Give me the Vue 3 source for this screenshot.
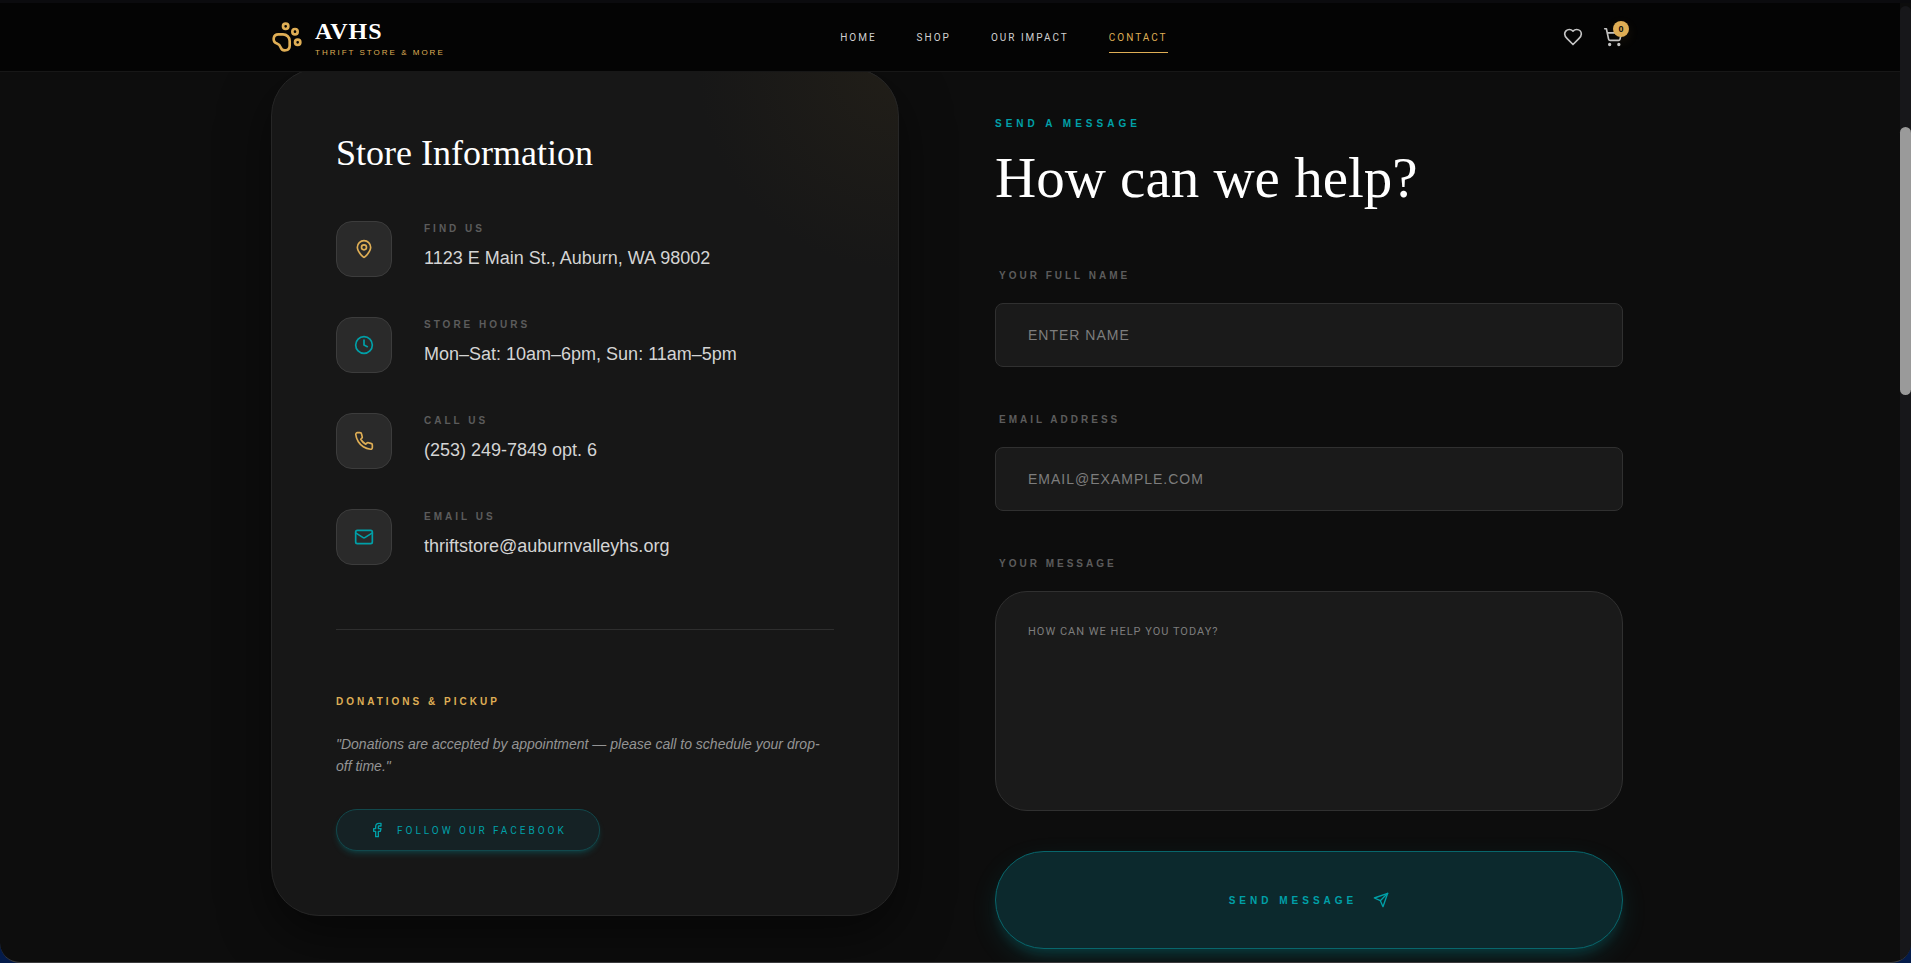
<template>
  <div class="window">
    <div class="page">
      <header class="site-header">
        <div class="header-inner">
          <a href="#" class="brand">
            <svg class="brand-icon" viewBox="0 0 24 24" aria-hidden="true">
              <circle cx="11" cy="4" r="2" />
              <circle cx="18" cy="8" r="2" />
              <circle cx="20" cy="16" r="2" />
              <path d="M9 10a5 5 0 0 1 5 5v3.500a3.500 3.500 0 0 1-6.840 1.045Q6.520 17.480 4.460 16.840A3.500 3.500 0 0 1 5.500 10Z" />
            </svg>
            <span class="brand-text">
              <strong>AVHS</strong>
              <small>Thrift Store &amp; More</small>
            </span>
          </a>

          <nav class="main-nav" aria-label="Main">
            <a
              v-for="link in navLinks"
              :key="link"
              href="#"
              :class="{ active: link === 'Contact' }"
            >{{ link }}</a>
          </nav>

          <div class="header-actions">
            <button type="button" aria-label="Wishlist">
              <svg viewBox="0 0 24 24" aria-hidden="true">
                <path d="M19 14c1.490-1.460 3-3.210 3-5.500A5.500 5.500 0 0 0 16.500 3c-1.760 0-3 .5-4.500 2-1.500-1.500-2.740-2-4.500-2A5.500 5.500 0 0 0 2 8.500c0 2.300 1.500 4.050 3 5.500l7 7Z" />
              </svg>
            </button>
            <button type="button" aria-label="Cart">
              <svg viewBox="0 0 24 24" aria-hidden="true">
                <circle cx="8" cy="21" r="1" />
                <circle cx="19" cy="21" r="1" />
                <path d="M2.050 2.050h2l2.660 12.420a2 2 0 0 0 2 1.580h9.780a2 2 0 0 0 1.950-1.570l1.650-7.430H5.120" />
              </svg>
              <span class="badge">{{ cartCount }}</span>
            </button>
          </div>
        </div>
      </header>

      <main class="contact">
        <section class="info-card">
          <h2>Store Information</h2>

          <ul class="info-list">
            <li v-for="item in storeInfo" :key="item.label">
              <span class="info-icon" :class="item.tone">
                <svg viewBox="0 0 24 24" aria-hidden="true">
                  <path v-for="d in item.paths" :key="d" :d="d" />
                </svg>
              </span>
              <div>
                <h3>{{ item.label }}</h3>
                <p>{{ item.value }}</p>
              </div>
            </li>
          </ul>

          <div class="donations">
            <h3>Donations &amp; Pickup</h3>
            <p>"Donations are accepted by appointment — please call to schedule your drop-off time."</p>
            <a href="#" class="facebook">
              <svg viewBox="0 0 24 24" aria-hidden="true">
                <path d="M18 2h-3a5 5 0 0 0-5 5v3H7v4h3v8h4v-8h3l1-4h-4V7a1 1 0 0 1 1-1h3z" />
              </svg>
              Follow our Facebook
            </a>
          </div>
        </section>

        <section class="message">
          <p class="eyebrow">Send a Message</p>
          <h1>How can we help?</h1>

          <form @submit.prevent>
            <div class="field">
              <label for="name">Your Full Name</label>
              <input id="name" v-model="form.name" type="text" placeholder="ENTER NAME" />
            </div>
            <div class="field">
              <label for="email">Email Address</label>
              <input id="email" v-model="form.email" type="email" placeholder="EMAIL@EXAMPLE.COM" />
            </div>
            <div class="field">
              <label for="message">Your Message</label>
              <textarea id="message" v-model="form.message" placeholder="HOW CAN WE HELP YOU TODAY?"></textarea>
            </div>
            <button type="submit" class="send">
              Send Message
              <svg viewBox="0 0 24 24" aria-hidden="true">
                <path d="m22 2-7 20-4-9-9-4Z" />
                <path d="M22 2 11 13" />
              </svg>
            </button>
          </form>
        </section>
      </main>
    </div>

    <div class="scroll-track" aria-hidden="true">
      <div class="scroll-thumb"></div>
    </div>
  </div>
</template>

<script setup>
import { ref, reactive } from 'vue';

const navLinks = ['Home', 'Shop', 'Our Impact', 'Contact'];
const cartCount = ref(0);

const form = reactive({ name: '', email: '', message: '' });

const storeInfo = [
  {
    label: 'Find Us',
    value: '1123 E Main St., Auburn, WA 98002',
    tone: 'gold',
    paths: [
      'M20 10c0 4.993-5.539 10.193-7.399 11.799a1 1 0 0 1-1.202 0C9.539 20.193 4 14.993 4 10a8 8 0 0 1 16 0',
      'M15 10a3 3 0 1 1-6 0a3 3 0 1 1 6 0'
    ]
  },
  {
    label: 'Store Hours',
    value: 'Mon–Sat: 10am–6pm, Sun: 11am–5pm',
    tone: 'teal',
    paths: ['M22 12a10 10 0 1 1-20 0a10 10 0 1 1 20 0', 'M12 6v6l4 2']
  },
  {
    label: 'Call Us',
    value: '(253) 249-7849 opt. 6',
    tone: 'gold',
    paths: [
      'M22 16.920v3a2 2 0 0 1-2.180 2 19.790 19.790 0 0 1-8.630-3.070 19.500 19.500 0 0 1-6-6 19.790 19.790 0 0 1-3.070-8.670A2 2 0 0 1 4.110 2h3a2 2 0 0 1 2 1.720 12.840 12.840 0 0 0 .7 2.810 2 2 0 0 1-.450 2.110L8.090 9.910a16 16 0 0 0 6 6l1.270-1.270a2 2 0 0 1 2.110-.450 12.840 12.840 0 0 0 2.810.7A2 2 0 0 1 22 16.920z'
    ]
  },
  {
    label: 'Email Us',
    value: 'thriftstore@auburnvalleyhs.org',
    tone: 'teal',
    paths: [
      'M4 4h16a2 2 0 0 1 2 2v12a2 2 0 0 1-2 2H4a2 2 0 0 1-2-2V6a2 2 0 0 1 2-2z',
      'm22 7-8.970 5.700a1.940 1.940 0 0 1-2.060 0L2 7'
    ]
  }
];
</script>

<style>
body {
  background: #041b4a;
}
</style>

<style scoped>
* {
  box-sizing: border-box;
}

.window {
  display: flex;
  height: 100vh;
  overflow: hidden;
  background: #0d0d0d;
  border-top: 3px solid #0b0b0e;
  border-bottom: 1px solid #3a3a3c;
  border-radius: 0 0 20px 20px;
  font-family: 'Liberation Sans', Arial, sans-serif;
  color: #d4d4d4;
}

.page {
  flex: 1;
  min-width: 0;
}

h1,
h2,
h3,
p,
ul {
  margin: 0;
  padding: 0;
}

h1,
h2 {
  font-family: 'Liberation Serif', serif;
  font-weight: 400;
  color: #fff;
}

a {
  text-decoration: none;
}

button {
  font-family: inherit;
  cursor: pointer;
}

svg {
  display: block;
  fill: none;
  stroke: currentColor;
  stroke-width: 2;
  stroke-linecap: round;
  stroke-linejoin: round;
}

/* Header */
.site-header {
  position: relative;
  z-index: 10;
  background: #040404;
  border-bottom: 1px solid #171717;
}

.header-inner,
.contact {
  max-width: 1406px;
  margin: 0 auto;
  padding: 0 30px 0 24px;
}

.header-inner {
  display: flex;
  align-items: center;
  justify-content: space-between;
  height: 68px;
}

.brand {
  display: flex;
  align-items: center;
  gap: 12px;
  color: #dfae55;
}

.brand-icon {
  width: 32px;
  height: 32px;
}

.brand-text {
  display: flex;
  flex-direction: column;
  gap: 4px;
  padding-top: 4px;
  text-transform: uppercase;
}

.brand-text strong {
  font-family: 'Liberation Serif', serif;
  font-size: 24px;
  line-height: 24px;
  letter-spacing: 1px;
  color: #fff;
}

.brand-text small {
  font-size: 8px;
  line-height: 12px;
  letter-spacing: 2px;
}

.main-nav {
  display: flex;
  gap: 40px;
}

.main-nav a {
  padding: 8px 0 6px;
  border-bottom: 1px solid transparent;
  font-family: Roboto, sans-serif;
  font-size: 10px;
  line-height: 16px;
  letter-spacing: 2px;
  text-transform: uppercase;
  color: #d0d0d0;
}

.main-nav a.active {
  color: #dfae55;
  border-color: #dfae55;
}

.header-actions {
  display: flex;
  gap: 20px;
}

.header-actions button {
  position: relative;
  padding: 0;
  border: 0;
  background: none;
  color: #c4c4c4;
}

.header-actions svg {
  width: 20px;
  height: 20px;
}

.badge {
  position: absolute;
  top: -6px;
  right: -6px;
  width: 16px;
  height: 16px;
  border-radius: 50%;
  background: #dfae55;
  box-shadow: 0 4px 12px rgb(223 174 85 / 0.1);
  color: #0d0d0d;
  font-size: 9px;
  font-weight: 700;
  line-height: 16px;
  text-align: center;
}

/* Contact layout */
.contact {
  display: grid;
  grid-template-columns: 1fr 1fr;
  gap: 96px;
  align-items: start;
  margin-top: -4px;
}

.info-card {
  padding: 64px;
  border: 1px solid #262626;
  border-radius: 48px;
  background: radial-gradient(circle at 100% 0, #211e18, transparent 200px), #171717;
  box-shadow: 0 20px 50px rgb(0 0 0 / 0.5);
}

.info-card h2 {
  font-size: 36px;
  line-height: 40px;
  margin-bottom: 48px;
}

h3,
.eyebrow,
.field label {
  font-size: 10px;
  line-height: 15px;
  font-weight: 700;
  letter-spacing: 3px;
  text-transform: uppercase;
  color: #5c5c5c;
}

.info-list {
  display: flex;
  flex-direction: column;
  gap: 40px;
  list-style: none;
}

.info-list li {
  display: flex;
  gap: 32px;
}

.info-list p {
  margin-top: 8px;
  font-size: 18px;
  line-height: 28px;
}

.info-icon {
  display: grid;
  place-items: center;
  width: 56px;
  height: 56px;
  border: 1px solid #3c3c3c;
  border-radius: 16px;
  background: #2a2a2a;
}

.info-icon svg {
  width: 20px;
  height: 20px;
}

.gold {
  color: #dfae55;
}

.teal {
  color: #00a0a8;
}

.donations {
  margin-top: 64px;
  padding-top: 64px;
  border-top: 1px solid #2e2e2e;
}

.donations h3 {
  color: #dfae55;
}

.donations p {
  margin: 24px 0 32px;
  font-size: 14px;
  line-height: 22px;
  font-style: italic;
  color: #949494;
}

.facebook {
  display: inline-flex;
  align-items: center;
  gap: 12px;
  height: 42px;
  padding: 0 32px;
  border: 1px solid #12484c;
  border-radius: 21px;
  background: #152225;
  box-shadow: 0 4px 6px -1px rgb(0 160 168 / 0.2), 0 2px 4px -2px rgb(0 160 168 / 0.2);
  font-family: Roboto, sans-serif;
  font-size: 10px;
  letter-spacing: 3px;
  text-transform: uppercase;
  color: #00a0a8;
}

.facebook svg {
  width: 16px;
  height: 16px;
}

/* Message form */
.message {
  padding-top: 48px;
}

.eyebrow {
  letter-spacing: 4px;
  color: #00a0a8;
}

.message h1 {
  margin: 16px 0 60px;
  font-size: 57px;
  line-height: 61px;
}

.field {
  display: flex;
  flex-direction: column;
  gap: 20px;
  margin-bottom: 45px;
}

.field label {
  padding-left: 4px;
}

.field input,
.field textarea {
  width: 100%;
  border: 1px solid #303030;
  background: #1a1a1a;
  color: #fff;
  font-family: inherit;
  letter-spacing: 1px;
  outline: none;
}

.field input {
  height: 64px;
  padding: 0 32px;
  border-radius: 8px;
  font-size: 14px;
}

.field textarea {
  display: block;
  height: 220px;
  padding: 32px;
  border-radius: 32px;
  font-family: Roboto, sans-serif;
  font-size: 11px;
  line-height: 16px;
  resize: none;
}

.field input::placeholder,
.field textarea::placeholder {
  color: #7d7d7d;
}

.field:last-of-type {
  margin-bottom: 40px;
}

.send {
  display: flex;
  align-items: center;
  justify-content: center;
  gap: 16px;
  width: 100%;
  padding: 40px 32px;
  border: 1px solid #08666c;
  border-radius: 49px;
  background: #0c292d;
  box-shadow: 0 10px 30px -5px rgb(0 160 168 / 0.2), 0 8px 12px -4px rgb(0 160 168 / 0.2);
  color: #00a0a8;
  font-size: 10px;
  font-weight: 700;
  letter-spacing: 4px;
  text-transform: uppercase;
}

.send svg {
  width: 16px;
  height: 16px;
}

/* Scrollbar */
.scroll-track {
  width: 11px;
  margin-top: 3px;
  padding-top: 121px;
  border-radius: 6px 6px 0 0;
  background: #17171a;
}

.scroll-thumb {
  height: 268px;
  border-radius: 6px;
  background: #9a9a9a;
}

@media (max-width: 1000px) {
  .contact {
    grid-template-columns: 1fr;
  }
}
</style>
